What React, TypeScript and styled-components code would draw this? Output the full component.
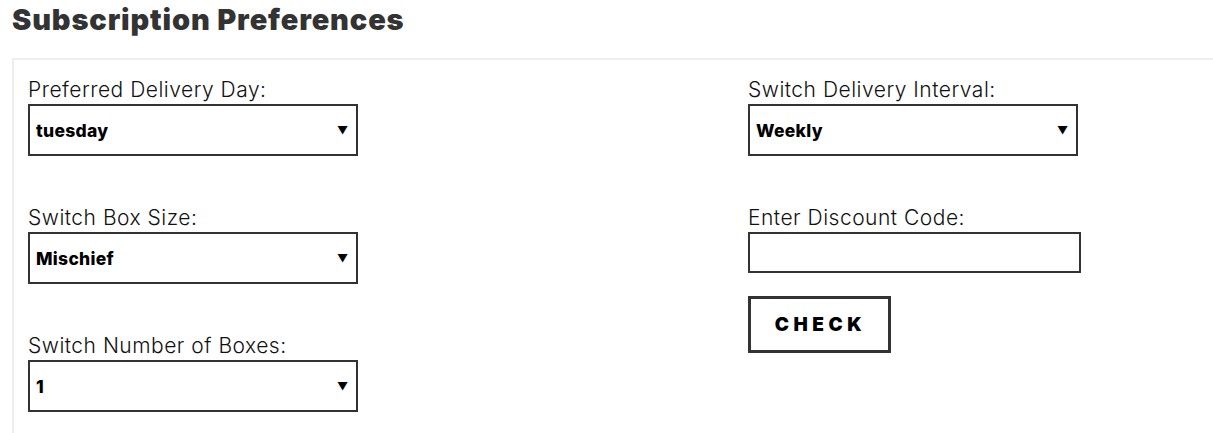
import * as React from 'react';
import styled, {createGlobalStyle} from 'styled-components';

const GlobalStyle = createGlobalStyle`
  body {
    margin: 0;
    background: #fff;
    font-family: Inter, "Liberation Sans", sans-serif;
    color: #333;
  }
`;

interface FieldProps {
  label: string;
  value: string;
  options: string[];
}

const SelectField = ({label, value, options}: FieldProps): JSX.Element => (
  <Field>
    <Label>{label}</Label>
    <SelectWrap>
      <Select defaultValue={value}>
        {options.map(o => (
          <option key={o} value={o}>
            {o}
          </option>
        ))}
      </Select>
      <Arrow>▼</Arrow>
    </SelectWrap>
  </Field>
);

export default function App(): JSX.Element {
  return (
    <Page>
      <GlobalStyle />
      <Title>Subscription Preferences</Title>
      <Panel>
        <Column>
          <SelectField
            label="Preferred Delivery Day:"
            value="tuesday"
            options={['monday', 'tuesday', 'wednesday', 'thursday', 'friday']}
          />
          <SelectField
            label="Switch Box Size:"
            value="Mischief"
            options={['Mischief', 'Mayhem']}
          />
          <SelectField
            label="Switch Number of Boxes:"
            value="1"
            options={['1', '2', '3']}
          />
        </Column>
        <Column>
          <SelectField
            label="Switch Delivery Interval:"
            value="Weekly"
            options={['Weekly', 'Fortnightly', 'Monthly']}
          />
          <Field>
            <Label>Enter Discount Code:</Label>
            <CodeInput type="text" />
            <CheckButton>CHECK</CheckButton>
          </Field>
        </Column>
      </Panel>
    </Page>
  );
}

const Page = styled.div`
  padding: 0 0 0 12px;
  overflow: hidden;
  height: 433px;
`;

const Title = styled.h2`
  margin: 0;
  padding-top: 3px;
  height: 55px;
  font-family: Inter, "Liberation Sans", sans-serif;
  font-weight: 900;
  font-size: 29px;
  line-height: 34px;
  letter-spacing: 0.85px;
  color: #333;
`;

const Panel = styled.div`
  display: grid;
  grid-template-columns: 720px 1fr;
  width: 1220px;
  box-sizing: border-box;
  border: 2px solid #eee;
  border-right: none;
  padding: 14px 0 60px 14px;
`;

const Column = styled.div`
  display: flex;
  flex-direction: column;
  gap: 46px;
`;

const Field = styled.div`
  display: flex;
  flex-direction: column;
  align-items: flex-start;
`;

const Label = styled.label`
  font-family: Inter, "Liberation Sans", sans-serif;
  font-weight: 300;
  font-size: 21px;
  line-height: 24px;
  letter-spacing: 0.5px;
  color: #111;
  padding-top: 4px;
  margin-bottom: 2px;
`;

const SelectWrap = styled.div`
  position: relative;
  width: 330px;
  height: 52px;
`;

const Select = styled.select`
  appearance: none;
  -webkit-appearance: none;
  width: 100%;
  height: 100%;
  box-sizing: border-box;
  border: 2px solid #333;
  border-radius: 0;
  background: #fff;
  padding: 0 30px 0 6px;
  font-family: Inter, "Liberation Sans", sans-serif;
  font-weight: 800;
  font-size: 17.5px;
  letter-spacing: 0.3px;
  color: #000;
  outline: none;
`;

const Arrow = styled.span`
  position: absolute;
  right: 10px;
  top: 50%;
  transform: translateY(-50%);
  font-size: 11px;
  color: #000;
  pointer-events: none;
`;

const CodeInput = styled.input`
  width: 333px;
  height: 41px;
  box-sizing: border-box;
  border: 2px solid #333;
  border-radius: 0;
  background: #fff;
  outline: none;
`;

const CheckButton = styled.button`
  margin-top: 23px;
  width: 143px;
  height: 57px;
  box-sizing: border-box;
  border: 3px solid #333;
  border-radius: 0;
  background: #fff;
  font-family: Inter, "Liberation Sans", sans-serif;
  font-weight: 900;
  font-size: 19px;
  letter-spacing: 4.6px;
  padding: 0 0 0 2px;
  color: #000;
  cursor: pointer;
`;
